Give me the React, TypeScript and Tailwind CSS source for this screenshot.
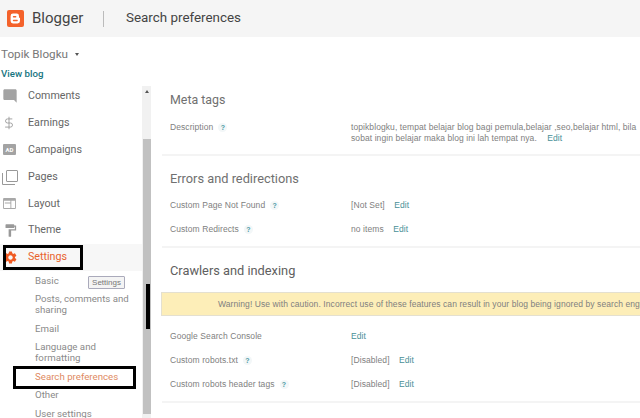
import { DollarSign } from "lucide-react";
import { MdFormatPaint, MdModeComment, MdSettings } from "react-icons/md";

const mainItems = [
  { label: "Comments", icon: <MdModeComment className="w-[16px] h-[16px] ml-[1.500px] text-[#a3a3a3]" /> },
  { label: "Earnings", icon: <DollarSign strokeWidth={1.500} className="w-[14px] h-[14px] ml-[2px] text-[#999]" /> },
  {
    label: "Campaigns",
    icon: (
      <div className="w-[13px] h-[11px] ml-[3px] rounded-[1px] bg-[#a3a3a3] text-white text-[6px] leading-[11px] text-center font-bold">
        AD
      </div>
    ),
  },
  {
    label: "Pages",
    icon: (
      <svg viewBox="0 0 16 16" className="w-[16px] h-[16px] ml-[2px] text-[#999]" fill="none" stroke="currentColor">
        <rect x="4.500" y="1.500" width="11" height="11" rx="0.500" />
        <path d="M0.500 4v11.500H13" />
      </svg>
    ),
  },
  {
    label: "Layout",
    icon: (
      <svg viewBox="0 0 14 12" className="w-[13px] h-[11px] ml-[3px] text-[#a8a8a8]" fill="currentColor">
        <path d="M1 0h12a1 1 0 0 1 1 1v10a1 1 0 0 1-1 1H1a1 1 0 0 1-1-1V1a1 1 0 0 1 1-1zm0 3v8h7V6H1.900V5H8V3H1zm8 0v8h4V3H9z" />
      </svg>
    ),
  },
  { label: "Theme", icon: <MdFormatPaint className="w-[15px] h-[15px] ml-[3px] text-[#999]" /> },
];

const subItems = ["Basic", "Posts, comments and sharing", "Email", "Language and formatting"];

function Help() {
  return (
    <span className="ml-[5px] w-[9px] h-[9px] rounded-full bg-[#f3f7f8] text-[#4d9aa5] text-[7px] leading-[9px] text-center font-bold">
      ?
    </span>
  );
}

function Edit({ className = "" }: { className?: string }) {
  return <span className={`text-[#4a9097] ${className}`}>Edit</span>;
}

function Row({ label, help, children }: { label: string; help?: boolean; children: React.ReactNode }) {
  return (
    <div className="flex items-center h-[24px]">
      <div className="w-[181px] shrink-0 flex items-center">
        <span>{label}</span>
        {help && <Help />}
      </div>
      <div>{children}</div>
    </div>
  );
}

export default function App() {
  return (
    <div className="relative w-[640px] h-[418px] overflow-hidden bg-white text-[#666] font-['Roboto',sans-serif]">
      {/* Header */}
      <div className="h-[37px] bg-[#f5f5f5] flex items-center">
        <svg viewBox="0 0 17 17" className="w-[17px] h-[17px] ml-[7px]">
          <rect width="17" height="17" rx="2" fill="#f4622b" />
          <path
            d="M6 3.500h3.600A2.400 2.400 0 0 1 12 5.900V7a1 1 0 0 0 1 1v3.100a2.400 2.400 0 0 1-2.400 2.400H6a2.400 2.400 0 0 1-2.400-2.400V5.900A2.400 2.400 0 0 1 6 3.500z"
            fill="#fff"
          />
          <rect x="5.800" y="6" width="3.600" height="1.400" rx="0.700" fill="#f4622b" />
          <rect x="5.800" y="9.800" width="5" height="1.400" rx="0.700" fill="#f4622b" />
        </svg>
        <span className="ml-[8px] w-[71px] text-[15px] text-[#444]">Blogger</span>
        <div className="w-px h-[16px] bg-[#bbb]" />
        <span className="ml-[22px] text-[13.400px] text-[#444]">Search preferences</span>
      </div>

      <div className="flex h-[381px]">
        {/* Sidebar */}
        <div className="w-[151px] shrink-0 flex flex-col">
          <div className="h-[46px] shrink-0">
            <div className="flex items-center pl-[1px] pt-[9px] text-[11.700px] leading-[16px] text-[#777]">
              Topik Blogku
              <span className="ml-[7px] border-x-[2.500px] border-t-[3px] border-x-transparent border-t-[#555]" />
            </div>
            <div className="pl-[1px] mt-[6px] text-[9.700px] leading-[12px] font-medium text-[#17757f]">View blog</div>
          </div>
          <div className="flex flex-1 min-h-0">
            <div className="w-[142px] shrink-0 overflow-hidden text-[10.700px]">
              {mainItems.map((item) => (
                <div key={item.label} className="flex items-center h-[26.800px]">
                  <div className="w-[28px] flex items-center">{item.icon}</div>
                  <span className="text-[#666]">{item.label}</span>
                </div>
              ))}
              <div className="flex items-center h-[27px] bg-[#f7f7f7] text-[#e8622c]">
                <div className="w-[28px] flex items-center">
                  <MdSettings className="w-[15px] h-[15px] ml-[3px] text-[#f05a22]" />
                </div>
                <span>Settings</span>
              </div>
              <div className="pl-[35px] pr-[10px] text-[9.700px] leading-[11px] text-[#8a8a8a]">
                {subItems.map((item) => (
                  <div key={item} className="py-[3.750px]">
                    {item}
                  </div>
                ))}
                <div className="py-[3.750px] text-[#e08a62]">Search preferences</div>
                <div className="py-[3.750px]">Other</div>
                <div className="py-[3.750px]">User settings</div>
              </div>
            </div>
            {/* Scrollbar */}
            <div className="w-[9px] mt-[3px] bg-[#f1f1f1] flex flex-col items-center">
              <div className="mt-[4px] h-[49px]">
                <div className="border-x-[2px] border-b-[3px] border-x-transparent border-b-[#555]" />
              </div>
              <div className="w-[8px] h-[275px] bg-[#c1c1c1]" />
            </div>
          </div>
        </div>

        {/* Main */}
        <div className="flex-1 min-w-0 overflow-hidden pl-[11px] text-[8.500px] tracking-[0.080px] font-['Liberation_Sans',sans-serif] text-[#808080]">
          <section className="h-[119px] border-b-2 border-[#f4f4f4]">
            <h2 className="pl-[8px] pt-[54px] text-[12.400px] leading-[18px] tracking-normal font-['Roboto',sans-serif] text-[#707070]">
              Meta tags
            </h2>
            <div className="flex pl-[8px] mt-[13px]">
              <div className="w-[181px] shrink-0 flex items-center h-[11px]">
                <span>Description</span>
                <Help />
              </div>
              <p className="w-[288px] shrink-0 leading-[10.500px] whitespace-nowrap">
                topikblogku, tempat belajar blog bagi pemula,belajar ,seo,belajar html, bila
                <br />
                sobat ingin belajar maka blog ini lah tempat nya. <Edit className="ml-[8px]" />
              </p>
            </div>
          </section>

          <section className="h-[92px] border-b-2 border-[#f4f4f4]">
            <h2 className="pl-[8px] pt-[14px] text-[12.800px] leading-[18px] tracking-normal font-['Roboto',sans-serif] text-[#707070]">
              Errors and redirections
            </h2>
            <div className="pl-[8px] mt-[5px]">
              <Row label="Custom Page Not Found" help>
                [Not Set] <Edit className="ml-[7px]" />
              </Row>
              <Row label="Custom Redirects" help>
                no items <Edit className="ml-[7px]" />
              </Row>
            </div>
          </section>

          <section className="border-b-2 border-[#f4f4f4] h-[155px]">
            <h2 className="pl-[8px] pt-[14px] text-[12.800px] leading-[18px] tracking-normal font-['Roboto',sans-serif] text-[#606060]">
              Crawlers and indexing
            </h2>
            <div className="mt-[12px] h-[24px] ml-[-1px] flex items-center whitespace-nowrap bg-[#fdeeb8] border-y border-l border-[#e4e0d0] pl-[56px]">
              Warning! Use with caution. Incorrect use of these features can result in your blog being ignored by search engines.
            </div>
            <div className="pl-[8px] mt-[8px]">
              <Row label="Google Search Console">
                <Edit />
              </Row>
              <Row label="Custom robots.txt" help>
                [Disabled] <Edit className="ml-[7px]" />
              </Row>
              <Row label="Custom robots header tags" help>
                [Disabled] <Edit className="ml-[7px]" />
              </Row>
            </div>
          </section>
        </div>
      </div>

      {/* Annotations and tooltip over the page */}
      <div className="absolute left-[3px] top-[245px] w-[80px] h-[25px] border-[3px] border-black" />
      <div className="absolute left-[13px] top-[366px] w-[123px] h-[23px] border-[3px] border-black" />
      <div className="absolute left-[146px] top-[284px] w-[4px] h-[45px] bg-black" />
      <div className="absolute left-[88px] top-[276px] w-[37px] h-[13px] border border-[#aab] rounded-[1px] bg-[#f4f4f4] text-[8px] leading-[11px] text-center text-[#777] font-['Liberation_Sans',sans-serif]">
        Settings
      </div>
    </div>
  );
}
